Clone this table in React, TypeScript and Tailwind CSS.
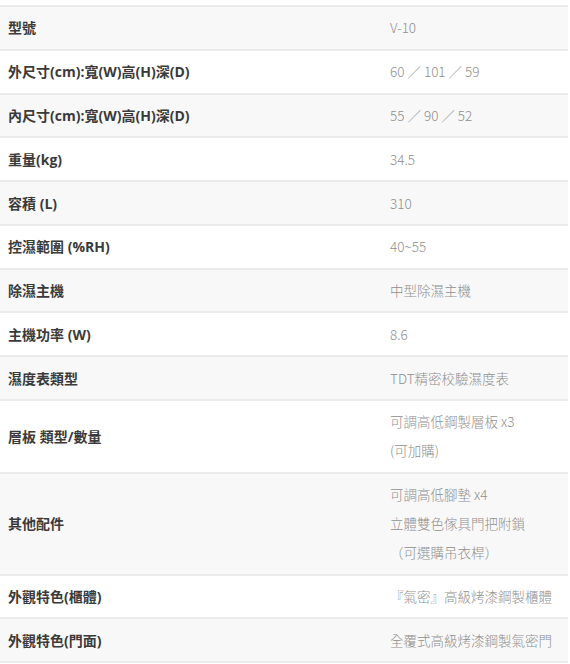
import React from 'react';

const specs: { label: string; values: string[] }[] = [
  { label: '型號', values: ['V-10'] },
  { label: '外尺寸(cm):寬(W)高(H)深(D)', values: ['60 ／ 101 ／ 59'] },
  { label: '內尺寸(cm):寬(W)高(H)深(D)', values: ['55 ／ 90 ／ 52'] },
  { label: '重量(kg)', values: ['34.5'] },
  { label: '容積 (L)', values: ['310'] },
  { label: '控濕範圍 (%RH)', values: ['40~55'] },
  { label: '除濕主機', values: ['中型除濕主機'] },
  { label: '主機功率 (W)', values: ['8.6'] },
  { label: '濕度表類型', values: ['TDT精密校驗濕度表'] },
  { label: '層板 類型/數量', values: ['可調高低鋼製層板 x3', '(可加購)'] },
  { label: '其他配件', values: ['可調高低腳墊 x4', '立體雙色傢具門把附鎖', '（可選購吊衣桿）'] },
  { label: '外觀特色(櫃體)', values: ['『氣密』高級烤漆鋼製櫃體'] },
  { label: '外觀特色(門面)', values: ['全覆式高級烤漆鋼製氣密門'] },
];

export default function App() {
  return (
    <div
      className="w-[570px] h-[664px] bg-white pt-[5px] overflow-hidden"
      style={{ fontFamily: '"Open Sans", "Noto Sans CJK TC", sans-serif' }}
    >
      <div className="w-[568px] border-t-2 border-[#ebebeb]">
        {specs.map((row, i) => (
          <div
            key={row.label}
            className={`flex border-b-2 border-[#ebebeb] ${i % 2 === 0 ? 'bg-[#f8f8f8]' : 'bg-white'}`}
          >
            <div className="w-[390px] shrink-0 pl-2 flex items-center text-[14px] font-bold text-[#3a3a3a]">
              {row.label}
            </div>
            <div className="flex-1 py-[6.4px] text-[13.5px] leading-[29px] font-light text-[#8f8f8f] font-['Noto_Sans_CJK_TC',sans-serif]">
              {row.values.map((v) => (
                <div key={v}>{v}</div>
              ))}
            </div>
          </div>
        ))}
      </div>
    </div>
  );
}
